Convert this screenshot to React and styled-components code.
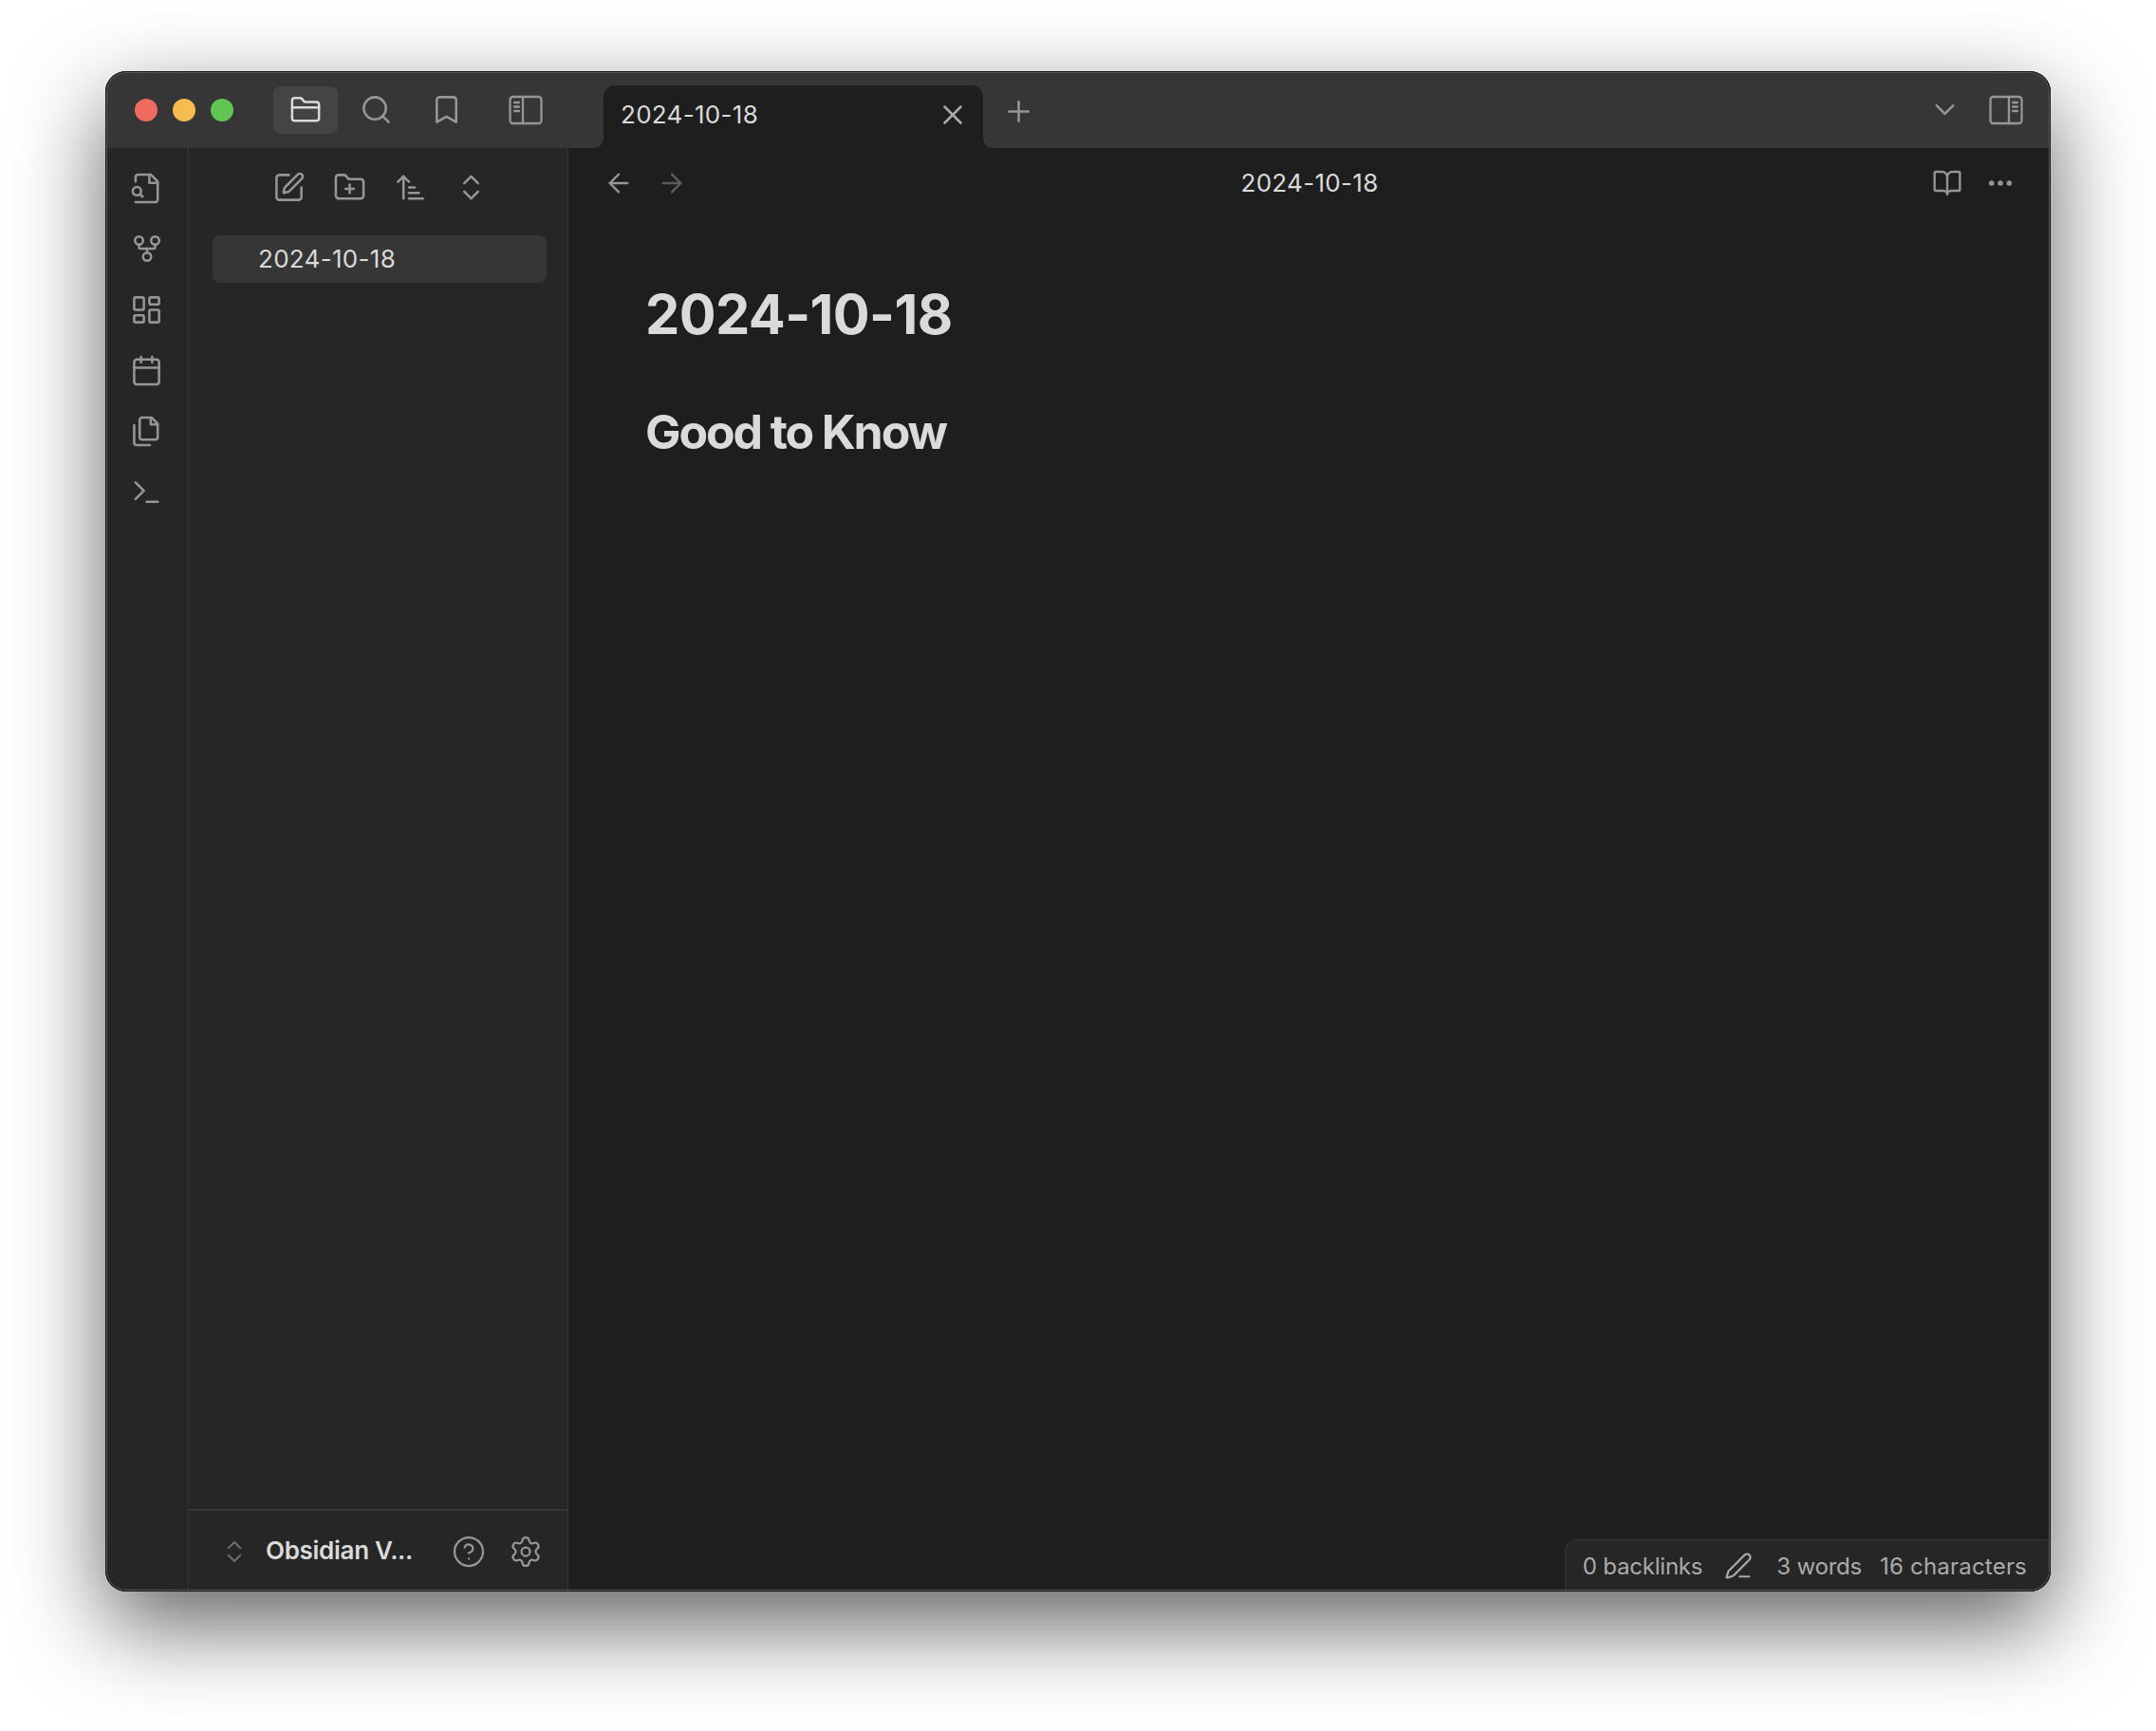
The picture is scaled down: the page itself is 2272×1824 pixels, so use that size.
import React from "react";
import styled, { createGlobalStyle } from "styled-components";
import {
  ArrowLeft,
  ArrowRight,
  ArrowUpNarrowWide,
  Bookmark,
  BookOpen,
  Calendar,
  ChevronDown,
  ChevronsUpDown,
  CircleHelp,
  Ellipsis,
  FolderClosed,
  FolderPlus,
  GitFork,
  LayoutDashboard,
  PenLine,
  Plus,
  Search,
  Settings,
  SquarePen,
  Terminal,
  X,
} from "lucide-react";

const GlobalStyle = createGlobalStyle`
  html, body {
    margin: 0;
    background: #fff;
  }
  body {
    font-family: Inter, "Liberation Sans", sans-serif;
    -webkit-font-smoothing: antialiased;
  }
`;

function PanelIcon({ side }) {
  const divider = side === "left" ? 15 : 21;
  const lineFrom = side === "left" ? 6 : 25;
  const lineTo = side === "left" ? 11 : 30;
  return (
    <svg width="36" height="32" viewBox="0 0 36 32" fill="none" stroke="currentColor" strokeWidth="2.3" strokeLinecap="round">
      <rect x="1.5" y="2" width="33" height="28" rx="3" />
      <path d={`M${divider} 2v28`} />
      <path d={`M${lineFrom} 8h${lineTo - lineFrom}M${lineFrom} 12.5h${lineTo - lineFrom}M${lineFrom} 17h${lineTo - lineFrom}`} />
    </svg>
  );
}

function LineIcon({ size, children }) {
  return (
    <svg width={size} height={size} viewBox="0 0 24 24" fill="none" stroke="currentColor" strokeWidth="1.75" strokeLinecap="round" strokeLinejoin="round">
      {children}
    </svg>
  );
}

function FileSearchIcon({ size }) {
  return (
    <LineIcon size={size}>
      <path d="M4 22h14a2 2 0 0 0 2-2V7l-5-5H6a2 2 0 0 0-2 2v3" />
      <path d="M14 2v6h6" />
      <path d="m9 18-1.5-1.5" />
      <circle cx="5" cy="14" r="3" />
    </LineIcon>
  );
}

function FilesIcon({ size }) {
  return (
    <LineIcon size={size}>
      <path d="M15.5 2H8.6c-.4 0-.8.2-1.1.5-.3.3-.5.7-.5 1.1v12.8c0 .4.2.8.5 1.1.3.3.7.5 1.1.5h9.8c.4 0 .8-.2 1.1-.5.3-.3.5-.7.5-1.1V6.5L15.5 2z" />
      <path d="M3 7.6v12.8c0 .4.2.8.5 1.1.3.3.7.5 1.1.5h9.8" />
      <path d="M15 2v5h5" />
    </LineIcon>
  );
}

function App() {
  return (
    <Page>
      <GlobalStyle />
      <Window>
        <TitleBar>
          <HeaderLeft>
            <Lights>
              <Light $color="#ee6a5f" />
              <Light $color="#f5bd4f" />
              <Light $color="#61c554" />
            </Lights>
            <HeaderTools>
              <ToolButton>
                <FolderClosed size={34} strokeWidth={1.75} />
              </ToolButton>
              <ToolSlot $w={80}>
                <Search size={35} strokeWidth={1.75} />
              </ToolSlot>
              <ToolSlot $w={68}>
                <Bookmark size={35} strokeWidth={1.75} />
              </ToolSlot>
              <ToolSlot $w={100}>
                <PanelIcon side="left" />
              </ToolSlot>
            </HeaderTools>
          </HeaderLeft>
          <TabHolder>
            <Tab>
              <TabTitle>2024-10-18</TabTitle>
              <TabClose>
                <X size={34} strokeWidth={1.75} />
              </TabClose>
            </Tab>
          </TabHolder>
          <HeaderRight>
            <NewTab>
              <Plus size={35} strokeWidth={1.75} />
            </NewTab>
            <HeaderEnd>
              <ChevronDown size={35} strokeWidth={1.75} />
              <PanelIcon side="right" />
            </HeaderEnd>
          </HeaderRight>
        </TitleBar>

        <Workspace>
          <Ribbon>
            <RibbonSlot><FileSearchIcon size={35} /></RibbonSlot>
            <RibbonSlot><GitFork size={34} strokeWidth={1.75} /></RibbonSlot>
            <RibbonSlot><LayoutDashboard size={35} strokeWidth={1.75} /></RibbonSlot>
            <RibbonSlot><Calendar size={35} strokeWidth={1.75} /></RibbonSlot>
            <RibbonSlot><FilesIcon size={35} /></RibbonSlot>
            <RibbonSlot><Terminal size={35} strokeWidth={1.75} /></RibbonSlot>
          </Ribbon>

          <Sidebar>
            <SidebarTools>
              <SidebarTool><SquarePen size={35} strokeWidth={1.75} /></SidebarTool>
              <SidebarTool><FolderPlus size={35} strokeWidth={1.75} /></SidebarTool>
              <SidebarTool><ArrowUpNarrowWide size={35} strokeWidth={1.75} /></SidebarTool>
              <SidebarTool><ChevronsUpDown size={35} strokeWidth={1.75} /></SidebarTool>
            </SidebarTools>
            <FileItem>2024-10-18</FileItem>
            <VaultBar>
              <VaultSwitch>
                <ChevronsUpDown size={30} strokeWidth={1.75} />
              </VaultSwitch>
              <VaultName>Obsidian V...</VaultName>
              <VaultActions>
                <VaultAction><CircleHelp size={36} strokeWidth={1.5} /></VaultAction>
                <VaultAction><Settings size={36} strokeWidth={1.5} /></VaultAction>
              </VaultActions>
            </VaultBar>
          </Sidebar>

          <Main>
            <ViewHeader>
              <NavGroup>
                <NavButton><ArrowLeft size={32} strokeWidth={1.75} /></NavButton>
                <NavButton $disabled><ArrowRight size={32} strokeWidth={1.75} /></NavButton>
              </NavGroup>
              <ViewTitle>2024-10-18</ViewTitle>
              <ViewActions>
                <ViewAction><BookOpen size={32} strokeWidth={1.75} /></ViewAction>
                <ViewAction><Ellipsis size={32} strokeWidth={2.2} /></ViewAction>
              </ViewActions>
            </ViewHeader>
            <Note>
              <NoteTitle>2024-10-18</NoteTitle>
              <NoteHeading>Good to Know</NoteHeading>
            </Note>
            <StatusBar>
              <StatusText>0 backlinks</StatusText>
              <StatusIcon><PenLine size={30} strokeWidth={1.75} /></StatusIcon>
              <StatusText>3 words</StatusText>
              <StatusText $last>16 characters</StatusText>
            </StatusBar>
          </Main>
        </Workspace>
      </Window>
    </Page>
  );
}

const Page = styled.div`
  box-sizing: border-box;
  width: 2272px;
  height: 1824px;
  padding: 75px 111px 147px;
  background: #fff;
  overflow: hidden;
`;

const Window = styled.div`
  position: relative;
  display: flex;
  flex-direction: column;
  height: 100%;
  border-radius: 22px;
  overflow: hidden;
  background: #1e1e1e;
  color: #dadada;
  box-shadow: 0 35px 95px rgba(0, 0, 0, 0.62);

  &::after {
    content: "";
    position: absolute;
    inset: 0;
    border-radius: 22px;
    border: 1px solid #111;
    box-shadow: inset 0 0 0 1px #5c5c5c;
    pointer-events: none;
  }
`;

const TitleBar = styled.header`
  display: flex;
  flex: none;
  height: 81px;
  background: #1e1e1e;
`;

const HeaderLeft = styled.div`
  display: flex;
  flex: none;
  align-items: center;
  box-sizing: border-box;
  width: 525px;
  background: #363636;
  border-bottom-right-radius: 10px;
`;

const Lights = styled.div`
  display: flex;
  gap: 16px;
  padding-left: 31px;
`;

const Light = styled.span`
  width: 24px;
  height: 24px;
  border-radius: 50%;
  background: ${(p) => p.$color};
`;

const HeaderTools = styled.div`
  display: flex;
  flex: none;
  align-items: center;
  margin-left: 42px;
  color: #969696;
`;

const ToolButton = styled.div`
  display: flex;
  align-items: center;
  justify-content: center;
  width: 68px;
  height: 50px;
  border-radius: 8px;
  color: #dadada;
  background: #444;
`;

const ToolSlot = styled.div`
  display: flex;
  align-items: center;
  justify-content: center;
  width: ${(p) => p.$w}px;
  height: 50px;
`;

const TabHolder = styled.div`
  display: flex;
  flex: none;
  align-items: flex-end;
  height: 100%;
  background: #363636;
`;

const Tab = styled.div`
  display: flex;
  align-items: center;
  justify-content: space-between;
  box-sizing: border-box;
  width: 400px;
  height: 66px;
  padding: 0 15px 4px 18px;
  background: #1e1e1e;
  border-radius: 12px 12px 0 0;
`;

const TabTitle = styled.span`
  margin-bottom: 2px;
  font-size: 26px;
  letter-spacing: 0.3px;
  color: #dadada;
`;

const TabClose = styled.span`
  display: flex;
  color: #ababab;
`;

const HeaderRight = styled.div`
  display: flex;
  flex: 1;
  align-items: center;
  justify-content: space-between;
  background: #363636;
  border-bottom-left-radius: 10px;
  color: #969696;
`;

const NewTab = styled.span`
  display: flex;
  margin-left: 20px;
  margin-top: 3px;
`;

const HeaderEnd = styled.div`
  display: flex;
  align-items: center;
  gap: 29px;
  padding-right: 29px;
`;

const Workspace = styled.div`
  display: flex;
  flex: 1;
  min-height: 0;
`;

const Ribbon = styled.nav`
  display: flex;
  flex-direction: column;
  flex: none;
  box-sizing: border-box;
  width: 88px;
  padding-top: 10px;
  background: #262626;
  border-right: 1px solid #363636;
  color: #969696;
`;

const RibbonSlot = styled.div`
  display: flex;
  align-items: center;
  justify-content: center;
  height: 64px;
`;

const Sidebar = styled.aside`
  display: flex;
  flex-direction: column;
  flex: none;
  box-sizing: border-box;
  width: 400px;
  background: #262626;
  border-right: 1px solid #363636;
`;

const SidebarTools = styled.div`
  display: flex;
  align-items: center;
  justify-content: center;
  height: 82px;
  padding-left: 3px;
  color: #969696;
`;

const SidebarTool = styled.div`
  display: flex;
  align-items: center;
  justify-content: center;
  width: 64px;
`;

const FileItem = styled.div`
  display: flex;
  align-items: center;
  box-sizing: border-box;
  height: 50px;
  margin: 10px 22px 0 25px;
  padding: 0 0 2px 48px;
  border-radius: 8px;
  background: #363636;
  font-size: 26px;
  letter-spacing: 0.3px;
  color: #dadada;
`;

const VaultBar = styled.div`
  display: flex;
  align-items: center;
  box-sizing: border-box;
  height: 87px;
  margin-top: auto;
  padding: 0 14px 0 33px;
  border-top: 2px solid #363636;
`;

const VaultSwitch = styled.span`
  display: flex;
  color: #6b6b6b;
`;

const VaultName = styled.span`
  margin: 0 0 2px 18px;
  font-size: 26px;
  font-weight: 600;
  letter-spacing: -0.3px;
  color: #dadada;
`;

const VaultActions = styled.div`
  display: flex;
  margin-left: auto;
  color: #969696;
`;

const VaultAction = styled.span`
  display: flex;
  align-items: center;
  justify-content: center;
  width: 60px;
`;

const Main = styled.main`
  position: relative;
  flex: 1;
  min-width: 0;
  background: #1e1e1e;
`;

const ViewHeader = styled.div`
  display: grid;
  grid-template-columns: 1fr auto 1fr;
  align-items: center;
  height: 74px;
`;

const NavGroup = styled.div`
  display: flex;
  padding-left: 25px;
`;

const NavButton = styled.span`
  display: flex;
  align-items: center;
  justify-content: center;
  width: 56px;
  color: ${(p) => (p.$disabled ? "#5c5c5c" : "#969696")};
`;

const ViewTitle = styled.div`
  margin-bottom: 2px;
  font-size: 26px;
  letter-spacing: 0.3px;
  color: #dadada;
`;

const ViewActions = styled.div`
  display: flex;
  justify-content: flex-end;
  padding-right: 25px;
  color: #969696;
`;

const ViewAction = styled.span`
  display: flex;
  align-items: center;
  justify-content: center;
  width: 56px;
`;

const Note = styled.article`
  padding: 66px 0 0 81px;
`;

const NoteTitle = styled.h1`
  margin: 0;
  font-size: 57.6px;
  line-height: 70px;
  font-weight: 700;
  letter-spacing: -0.01em;
  color: #dadada;
`;

const NoteHeading = styled.h2`
  margin: 57px 0 0;
  font-size: 50px;
  line-height: 64px;
  font-weight: 700;
  letter-spacing: -2.1px;
  color: #dadada;
`;

const StatusBar = styled.footer`
  position: absolute;
  right: 0;
  bottom: 0;
  display: flex;
  align-items: center;
  box-sizing: border-box;
  height: 55px;
  padding: 0 25px 0 18px;
  background: #262626;
  border: 1px solid #363636;
  border-width: 1px 0 0 1px;
  border-top-left-radius: 12px;
  color: #ababab;
`;

const StatusText = styled.span`
  font-size: 24px;
  margin-left: ${(p) => (p.$last ? "19px" : "0")};
  letter-spacing: ${(p) => (p.$last ? "0.2px" : "-0.2px")};
`;

const StatusIcon = styled.span`
  display: flex;
  margin: 0 25px 0 23px;
`;

export default App;
